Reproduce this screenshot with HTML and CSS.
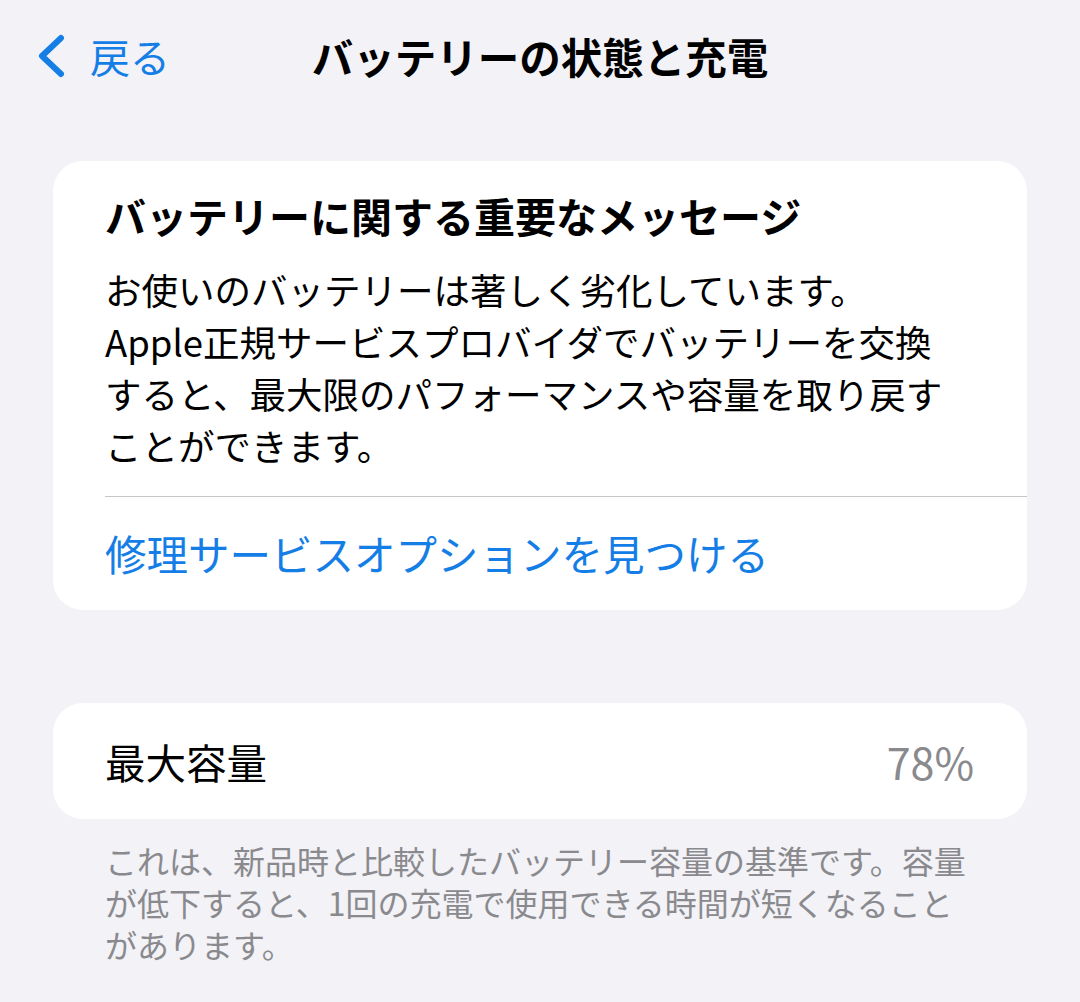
FILE: index.html
```html
<!DOCTYPE html>
<html lang="ja">
<head>
    <meta charset="UTF-8">
    <title>バッテリーの状態と充電</title>
    <link rel="stylesheet" href="styles.css">
</head>
<body>

<nav class="navbar">
    <a class="back" href="#">
        <svg class="chevron" width="30" height="44" viewBox="0 0 30 44">
            <path d="M25 4 L6 22 L25 40" fill="none" stroke="currentColor" stroke-width="6" stroke-linecap="round" stroke-linejoin="round"/>
        </svg>
        <span>戻る</span>
    </a>
    <h1 class="nav-title">バッテリーの状態と充電</h1>
    <div></div>
</nav>

<main class="content">
    <section class="card message">
        <h2>バッテリーに関する重要なメッセージ</h2>
        <p class="message-text">
            お使いのバッテリーは著しく劣化しています。<br>
            Apple正規サービスプロバイダでバッテリーを交換<br>
            すると、最大限のパフォーマンスや容量を取り戻す<br>
            ことができます。
        </p>
        <div class="divider"></div>
        <a class="link" href="#">修理サービスオプションを見つける</a>
    </section>

    <section class="card row">
        <span class="row-label">最大容量</span>
        <span class="row-value">78%</span>
    </section>
    <p class="footnote">
        これは、新品時と比較したバッテリー容量の基準です。容量<br>
        が低下すると、1回の充電で使用できる時間が短くなること<br>
        があります。
    </p>
</main>

</body>
</html>
```

FILE: styles.css
```css
body {
    margin: 0;
    background: #f2f2f7;
    font-family: "Noto Sans CJK JP", "Noto Sans", sans-serif;
    color: #000;
}

.navbar {
    display: grid;
    grid-template-columns: 1fr auto 1fr;
    align-items: center;
    height: 112px;
    margin-bottom: 4px;
}

.back {
    display: flex;
    align-items: center;
    gap: 24px;
    padding-left: 36px;
    color: #157ee6;
    text-decoration: none;
    font-size: 40px;
}

.nav-title {
    margin: 0;
    font-size: 41.5px;
    font-weight: 700;
}

.content {
    margin: 0 53px;
    padding-top: 45px;
}

.card {
    background: white;
    border-radius: 30px;
}

.message {
    padding: 28px 0 31px 52px;
}

.message h2 {
    margin: 0;
    font-size: 41px;
    line-height: 52px;
    font-weight: 700;
}

.message-text {
    margin: 23px 0 0;
    font-size: 36.5px;
    line-height: 52px;
}

.divider {
    height: 1px;
    background: #c6c6c8;
    margin-top: 24px;
}

.link {
    display: block;
    margin-top: 30px;
    color: #157ee6;
    text-decoration: none;
    font-size: 41.5px;
    line-height: 52px;
}

.row {
    margin-top: 93px;
    height: 116px;
    padding: 0 53px 0 52px;
    display: flex;
    justify-content: space-between;
    align-items: center;
    font-size: 40.5px;
}

.row-value {
    color: #8a8a8e;
    font-size: 43px;
}

.footnote {
    margin: 20px 0 0 52px;
    font-size: 32px;
    line-height: 42px;
    color: #8a8a8e;
}
```
